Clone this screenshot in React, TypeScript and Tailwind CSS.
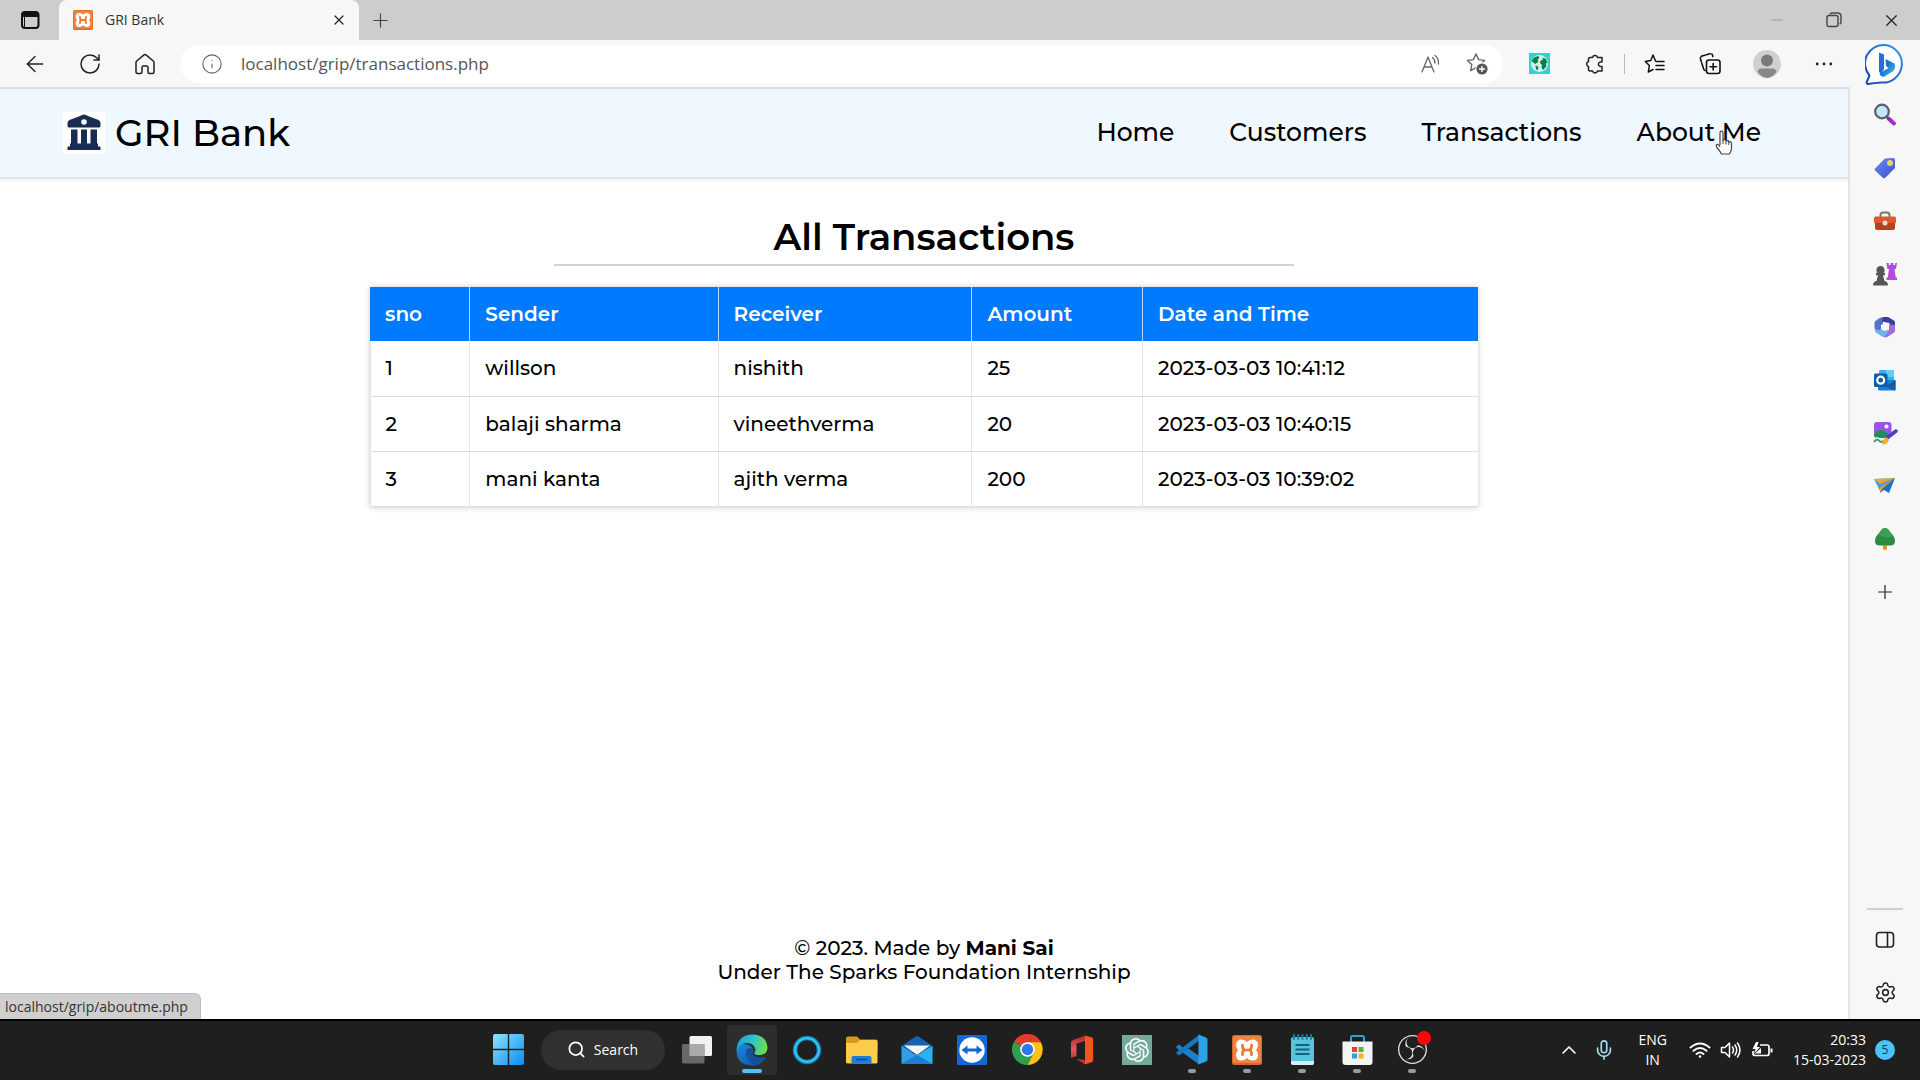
import type { ReactNode } from "react";
import { ArrowLeft, ChevronUp, Info, Mic, Minus, Plus, RotateCw, Search, Settings, X } from "lucide-react";
import { SiObsstudio, SiOpenai } from "react-icons/si";

const transactions = [
  ["1", "willson", "nishith", "25", "2023-03-03 10:41:12"],
  ["2", "balaji sharma", "vineethverma", "20", "2023-03-03 10:40:15"],
  ["3", "mani kanta", "ajith verma", "200", "2023-03-03 10:39:02"],
];

const columns = [
  { label: "sno", width: "w-[9%]" },
  { label: "Sender", width: "w-[22.4%]" },
  { label: "Receiver", width: "w-[22.9%]" },
  { label: "Amount", width: "w-[15.4%]" },
  { label: "Date and Time", width: "w-[30.3%]" },
];

const navLinks = ["Home", "Customers", "Transactions", "About Me"];

function IconButton({ label, className, children }: { label: string; className: string; children: ReactNode }) {
  return (
    <button type="button" aria-label={label} className={`flex shrink-0 items-center justify-center ${className}`}>
      {children}
    </button>
  );
}

/* ---------- browser icons ---------- */

function TabActionsIcon() {
  return (
    <svg width="20" height="20" viewBox="0 0 20 20" fill="none" stroke="#111" strokeWidth="2">
      <rect x="2" y="2" width="16.500" height="16" rx="3" />
      <path d="M2 5h16.500" strokeWidth="4" />
      <path d="M4.500 7v11" strokeWidth="1" />
    </svg>
  );
}

function XamppIcon({ size }: { size: number }) {
  return (
    <svg width={size} height={size} viewBox="0 0 30 30">
      <rect width="30" height="30" rx="2.500" fill="#d9662a" />
      <rect x="1" y="1" width="28" height="27" rx="2" fill="#ee8440" />
      <path
        d="M9.500 4.500Q13 4.500 15 7q2-2.500 5.500-2.500 5.500 0 5.500 5.500 0 3-2 5 2 2 2 5 0 5.500-5.500 5.500Q17 25.500 15 23q-2 2.500-5.500 2.500Q4 25.500 4 20q0-3 2-5-2-2-2-5Q4 4.500 9.500 4.500Z"
        fill="#fff"
      />
      <path d="M10.500 10.200v1.300q0 3.500 3 3.500h3q3 0 3-3.500v-1.300M10.500 19.800v-1.300q0-3.500 3-3.500h3q3 0 3 3.500v1.300" fill="none" stroke="#ea7a35" strokeWidth="2.700" strokeLinecap="round" />
    </svg>
  );
}

function HomeIcon() {
  return (
    <svg width="22" height="22" viewBox="0 0 22 22" fill="none" stroke="#222" strokeWidth="1.500" strokeLinejoin="round">
      <path d="M2 9.500Q2 8.700 2.700 8L10 1.900q1-.8 2 0L19.300 8q.7.700.7 1.500V19q0 1.500-1.500 1.500h-3Q14 20.500 14 19v-4.500q0-1.500-1.500-1.500h-3Q8 13 8 14.500V19q0 1.500-1.500 1.500h-3Q2 20.500 2 19z" />
    </svg>
  );
}

function ReadAloudIcon() {
  return (
    <svg width="22" height="22" viewBox="0 0 22 22" fill="none" stroke="#666" strokeWidth="1.300" strokeLinecap="round" strokeLinejoin="round">
      <path d="M2 19 8 4l6 15M4.200 14h7.600" />
      <path d="M12.500 4.500q2.500 2 2.500 5.500M15 2.500q4 3 3.500 8.500" />
    </svg>
  );
}

const starPath = "M11 2l2.600 5.600 6 .8-4.400 4.200 1.100 6L11 15.700l-5.300 2.900 1.100-6L2.400 8.400l6-.8z";

function StarPlusIcon() {
  return (
    <svg width="24" height="24" viewBox="0 0 24 24" fill="none" stroke="#666" strokeWidth="1.400" strokeLinejoin="round">
      <path d={starPath} />
      <circle cx="17" cy="17" r="6.200" fill="#555" stroke="#fff" strokeWidth="1.200" />
      <path d="M17 14v6M14 17h6" stroke="#fff" />
    </svg>
  );
}

function GlobeExtensionIcon() {
  return (
    <svg width="21" height="21" viewBox="0 0 21 21">
      <rect width="21" height="21" fill="#2fd3cf" />
      <circle cx="10.500" cy="10.500" r="8.500" fill="#c9f7ef" />
      <path d="M2.500 8 5 4.500 9 3l1.500 1.500L8.500 7l1 1.500-3 2.500-1.500-1zM13 5l3.500.5 2 4-1.500 1 .3 3L14 17l-1.500-2.500.5-2.500-2-2 .5-2.500 2.500-.5zM6.500 12.500l3 1.200-.8 3.500-1.700-1z" fill="#157a3d" />
    </svg>
  );
}

function PuzzleIcon() {
  return (
    <svg width="22" height="22" viewBox="0 0 22 22" fill="none" stroke="#222" strokeWidth="1.500" strokeLinejoin="round">
      <path d="M6 4.500h2.500a2.600 2.600 0 0 1 5 0H18V9h-.8a2.300 2.300 0 1 0 0 4.500h.8V18h-4.500a2.600 2.600 0 0 1-5 0H6a1.500 1.500 0 0 1-1.500-1.500v-3a2.600 2.600 0 0 1 0-5V6A1.500 1.500 0 0 1 6 4.500Z" />
    </svg>
  );
}

function FavoritesIcon() {
  return (
    <svg width="22" height="22" viewBox="0 0 22 22" fill="none" stroke="#111" strokeWidth="1.500" strokeLinejoin="round" strokeLinecap="round">
      <path d="M11.500 8 9 2 6.800 7.600l-5.500.8 4 4.200-1 6.400L9 16.500M12 8.500h8M12 12.500h8M12 16.500h8" />
    </svg>
  );
}

function CollectionsIcon() {
  return (
    <svg width="24" height="24" viewBox="0 0 24 24" fill="none" stroke="#111" strokeWidth="1.600" strokeLinejoin="round" strokeLinecap="round">
      <path d="M5 15 2.500 7Q2 5 4 4l8-2.300Q14 1.500 14.500 3l.3 1.500M7 18.500Q5.500 18 5 15" strokeDasharray="4 1.500" />
      <rect x="8.500" y="8" width="13.500" height="13.500" rx="2.500" />
      <path d="M15.200 11.500v6.500M12 14.700h6.500" />
    </svg>
  );
}

function AvatarIcon() {
  return (
    <svg width="28" height="28" viewBox="0 0 28 28">
      <circle cx="14" cy="14" r="14" fill="#d2d0ce" />
      <circle cx="14" cy="10.500" r="6" fill="#7c7a78" />
      <path d="M4.500 21.500q1-3 4-3h11q3 0 4 3Q19.500 28 14 28t-9.500-6.500Z" fill="#8a8886" />
    </svg>
  );
}

function BingIcon() {
  return (
    <svg width="40" height="42" viewBox="0 0 40 42">
      <defs>
        <linearGradient id="bingRing" x1="1" y1="0" x2="0" y2="1">
          <stop offset="0" stopColor="#2f9be8" />
          <stop offset="1" stopColor="#1b3fae" />
        </linearGradient>
        <linearGradient id="bingB" x1="0" y1="0" x2="1" y2="1">
          <stop offset="0" stopColor="#2b6fe0" />
          <stop offset="0.500" stopColor="#1a6fd8" />
          <stop offset="1" stopColor="#3ecfe0" />
        </linearGradient>
      </defs>
      <path d="M20 2a18.500 18.500 0 1 1-4 37.500q-7 .5-13 1.500-2-.5-1-2.500l2.500-6A18.500 18.500 0 0 1 20 2Z" fill="#fff" stroke="url(#bingRing)" strokeWidth="2" />
      <path d="M14 9.500 19 11.500v15l-3.500 4L14 28.500zM20.500 16l9 4.500q2 5-2 8l-8 5q-3.500 1-5-3l9-5.500-2.500-2z" fill="url(#bingB)" />
    </svg>
  );
}

/* ---------- sidebar icons ---------- */

function MagnifierColor() {
  return (
    <svg width="24" height="24" viewBox="0 0 24 24">
      <path d="m15.500 15.500 5.500 5" stroke="#a32bd6" strokeWidth="4" strokeLinecap="round" />
      <path d="m13.500 13.500 3 3" stroke="#555" strokeWidth="2" />
      <circle cx="9" cy="8.500" r="6.800" fill="#c5e6f7" stroke="#5c5f63" strokeWidth="2.200" />
    </svg>
  );
}

function TagColor() {
  return (
    <svg width="24" height="24" viewBox="0 0 24 24">
      <defs>
        <linearGradient id="tag" x1="0" y1="0" x2="1" y2="1">
          <stop offset="0" stopColor="#6b8cf5" />
          <stop offset="1" stopColor="#3b4fce" />
        </linearGradient>
      </defs>
      <path d="M12 2.500 20 2q2 0 2 2v8L12 22q-1 .8-2 0l-8-7.500q-.8-1 0-2z" fill="url(#tag)" />
      <circle cx="17" cy="7" r="3" fill="#e8d36a" />
    </svg>
  );
}

function ToolboxColor() {
  return (
    <svg width="24" height="24" viewBox="0 0 24 24">
      <path d="M7.500 8V6q0-2.500 2.500-2.500h4q2.500 0 2.500 2.500v2" fill="none" stroke="#777" strokeWidth="2" />
      <rect x="1" y="7.500" width="22" height="7" rx="1.500" fill="#dc5a2c" />
      <path d="M2 14h20v5q0 2-2 2H4q-2 0-2-2z" fill="#b8401b" />
      <circle cx="12" cy="14" r="2.500" fill="#ddd" />
    </svg>
  );
}

function ChessColor() {
  return (
    <svg width="26" height="26" viewBox="0 0 26 26">
      <path d="M14.500 2h2.300v2h1.800V2h2.800v2h1.800V2H25l-1 6h-1.500l1.200 8.500H25V19H14.500v-2.500h1.300L17 8h-1.500z" fill="#b44be0" />
      <path d="M8.500 5a4 4 0 0 1 3 6.700h1.500v2.500h-2L12.500 20q3.500.5 3.500 4.500H1Q1 20.500 4.500 20L6 14.200H4v-2.500h1.500A4 4 0 0 1 8.500 5Z" fill="#555" />
    </svg>
  );
}

function Microsoft365Color() {
  return (
    <svg width="24" height="24" viewBox="0 0 24 24">
      <path d="M7.500 2.500 14 2l-4 4.500v5L6 17l-3.500-2q-1-.8-1-2V8q0-1.500 1.200-2.200z" fill="#5a6fc8" />
      <path d="M10 2h5l6 3.500q1 .8 1 2V13l-5.500-3.500V8L9 6.500z" fill="#3a3f9e" />
      <path d="M22 10v5.500q0 1.500-1.200 2.200L14 22q-1.500.8-3 0l-4-2.500 9-5V9.500z" fill="#a06ad8" />
      <path d="M2 14q4 2 8 0l6.500 1.500L11 21.500q-1.500.5-3-.5l-5-3.500Q1.500 16.500 2 14Z" fill="#6cb4ee" />
      <path d="M12 8l4 2v4l-4 2-4-2v-4z" fill="#f7f7f7" />
    </svg>
  );
}

function OutlookColor() {
  return (
    <svg width="24" height="24" viewBox="0 0 24 24">
      <rect x="6" y="2" width="15" height="14" rx="1.500" fill="#36b0e8" />
      <path d="M13 2h8v7h-8z" fill="#65cdf5" />
      <path d="M5 12h17.500v9q0 1.500-1.500 1.500H6.500Q5 22.500 5 21z" fill="#1a7fd0" />
      <path d="m22.500 12-10 6.500 9 4q1 0 1-1.500z" fill="#145da6" />
      <rect x="1" y="5.500" width="13.500" height="13.500" rx="1.500" fill="#0f5ca8" />
      <circle cx="7.700" cy="12.200" r="3.500" fill="none" stroke="#fff" strokeWidth="2.200" />
    </svg>
  );
}

function DesignerColor() {
  return (
    <svg width="26" height="26" viewBox="0 0 26 26">
      <rect x="2" y="2" width="17.500" height="15" rx="3" fill="#9a55e8" />
      <path d="M2 14.500q6-7 11-3l5 4q0 2.500-3 2.500H5q-3 0-3-3.500Z" fill="#218c5c" />
      <circle cx="14.500" cy="6.500" r="2" fill="#fff" />
      <path d="M2 22q3-4 5-1.500t4 .5" fill="none" stroke="#f7f7f7" strokeWidth="4.500" />
      <path d="M2 22q3-4 5-1.500t4 .5" fill="none" stroke="#279b62" strokeWidth="1.800" />
      <path d="m15 18 9-7" stroke="#4b3fc4" strokeWidth="3.500" strokeLinecap="round" />
      <path d="M10 24.500q1-6 4.500-7.500l2.500 3q-2 5-7 4.500Z" fill="#f0ae2c" />
    </svg>
  );
}

function DropColor() {
  return (
    <svg width="24" height="24" viewBox="0 0 24 24">
      <path d="M1 5 22 4 8 13z" fill="#56b4ef" />
      <path d="m1 5 21-1-14 7z" fill="#e9a13b" />
      <path d="m1 5 6 5 15-6-8 11-7 2z" fill="#3f9fe5" />
      <path d="M22 4 7 13v6l4-3 5 3z" fill="#1f6fc4" />
      <path d="M7 13 22 4 10 14l-3 5z" fill="#f0962e" />
    </svg>
  );
}

function TreeColor() {
  return (
    <svg width="24" height="24" viewBox="0 0 24 24">
      <path d="M10 17h4v5q-2 2-4 0z" fill="#e6952f" />
      <path d="M12 1q3 0 5 4 5 4.500 5 9 0 4.500-5 4.500H7q-5 0-5-4.500 0-4.500 5-9 2-4 5-4Z" fill="#2f8a46" />
      <path d="M12 1q3 0 5 4 2 2 3 4-6 3-15-1 1-1.500 2-3 2-4 5-4Z" fill="#3c9f56" />
    </svg>
  );
}

function SidePanelIcon() {
  return (
    <svg width="20" height="18" viewBox="0 0 20 18" fill="none" stroke="#222" strokeWidth="1.600">
      <rect x="1.500" y="1.500" width="17" height="14.500" rx="3" />
      <path d="M12.500 1.500V16" />
    </svg>
  );
}

const sideApps = [
  { label: "Search", icon: <MagnifierColor /> },
  { label: "Shopping", icon: <TagColor /> },
  { label: "Tools", icon: <ToolboxColor /> },
  { label: "Games", icon: <ChessColor /> },
  { label: "Microsoft 365", icon: <Microsoft365Color /> },
  { label: "Outlook", icon: <OutlookColor /> },
  { label: "Image Creator", icon: <DesignerColor /> },
  { label: "Drop", icon: <DropColor /> },
  { label: "Tree", icon: <TreeColor /> },
  { label: "Customize", icon: <Plus size={22} strokeWidth={1.3} color="#222" /> },
];

/* ---------- page ---------- */

function BankLogo() {
  return (
    <svg width="42" height="42" viewBox="0 0 42 42">
      <rect width="42" height="42" fill="#fff" />
      <g fill="#182c54">
        <path d="M21 2.500q2 0 4 1.500l10.500 4q2 1 2 3v3q0 1.500-1.500 1.500H6Q4.500 15.500 4.500 14v-3q0-2 2-3L17 4q2-1.500 4-1.500Z" />
        <path d="M8 17.500h6.500v15H8zM18 17.500h6v15h-6zM27.500 17.500H34v15h-6.500z" />
        <path d="M7 31.500h28v3h2.500v3.500h-33v-3.500H7z" />
      </g>
      <circle cx="21" cy="10" r="2.800" fill="#fff" />
    </svg>
  );
}

function HandCursor() {
  return (
    <svg width="20" height="26" viewBox="0 0 20 26" className="pointer-events-none absolute top-4 right-[27px]">
      <path
        d="M6 15V3q0-1.800 1.500-1.800T9 3v7q2.500-1 3 .8 2.300-.8 2.800 1 2.700-.5 2.700 2V18q0 3-2 6H7.500Q6 21 3 17.500 1.500 15 3 14.500t3 2.500"
        fill="#fff"
        stroke="#444"
        strokeWidth="1.200"
      />
      <path d="M9 10v4M12 11v3.500M14.800 12v3" stroke="#444" />
    </svg>
  );
}

/* ---------- taskbar icons ---------- */

function WindowsIcon() {
  return (
    <svg width="31" height="31" viewBox="0 0 31 31">
      <defs>
        <linearGradient id="win" x1="0" y1="0" x2="1" y2="1">
          <stop offset="0" stopColor="#8fe3ff" />
          <stop offset="1" stopColor="#0a8cf0" />
        </linearGradient>
      </defs>
      <path d="M2 0h12.800v14.800H0V2q0-2 2-2ZM16.200 0H29q2 0 2 2v12.800H16.200zM0 16.200h14.800V31H2q-2 0-2-2zM16.200 16.200H31V29q0 2-2 2H16.200z" fill="url(#win)" />
    </svg>
  );
}

function TaskViewIcon() {
  return (
    <svg width="32" height="30" viewBox="0 0 32 30">
      <rect x="8.500" y="1" width="22.500" height="20" rx="1.500" fill="#f1f1f1" />
      <rect x="1" y="9" width="22.500" height="19.500" rx="1.500" fill="#777" fillOpacity="0.850" />
      <path d="M8.500 9h15v12h-15z" fill="#a9a9a9" />
    </svg>
  );
}

function EdgeIcon() {
  return (
    <svg width="32" height="32" viewBox="0 0 32 32">
      <defs>
        <linearGradient id="edgeTop" x1="0" y1="0.300" x2="1" y2="0.500">
          <stop offset="0" stopColor="#1f9de0" />
          <stop offset="0.500" stopColor="#2fc3c8" />
          <stop offset="1" stopColor="#6be04a" />
        </linearGradient>
        <linearGradient id="edgeBody" x1="0" y1="0" x2="0.800" y2="1">
          <stop offset="0" stopColor="#1b8be0" />
          <stop offset="1" stopColor="#0f56a8" />
        </linearGradient>
      </defs>
      <path d="M.5 16.500Q1 8 8 10q9 1 9.500 7-2 2 0 4.500 4 3.500 10.500 1.500 1.500-.5 1 1Q25 31.500 16.500 31.500.5 31 .5 16.500Z" fill="url(#edgeBody)" />
      <path d="M11 15q-2.500 5 1 10.500 4 5.500 9.500 5.500 5-2 7.500-7 .5-1.500-1-1Q21 25 17.500 21.500 15 18 17.500 16 16 13 11 15Z" fill="#174f9c" />
      <path d="M.5 16.500Q1.500.5 16.500.5 31 1 31.500 14q-.5 7-8.500 7-5.500 0-4.500-2.500 1.500-2 .5-4.500-2-5-8.500-5-6.500 0-10 7.500Z" fill="url(#edgeTop)" />
    </svg>
  );
}

function CortanaIcon() {
  return (
    <svg width="30" height="30" viewBox="0 0 30 30" fill="none">
      <circle cx="15" cy="15" r="12" stroke="#1282b8" strokeWidth="4.500" />
      <circle cx="15" cy="15" r="11.800" stroke="#33c4f2" strokeWidth="2.200" />
    </svg>
  );
}

function ExplorerIcon() {
  return (
    <svg width="32" height="30" viewBox="0 0 32 30">
      <path d="M0 3.500Q0 1.500 2 1.500h9l3 3H30q1.500 0 1.500 1.500v10H0z" fill="#d99a1c" />
      <path d="M0 8h11l3-3h16q1.500 0 1.500 1.500V27q0 1.500-1.500 1.500H2Q0 28.500 0 27z" fill="#fbcd4a" />
      <path d="M5.500 28.500V23q0-2 2-2h16q2 0 2 2v5.500z" fill="#1d7fd6" />
      <path d="M10 24.500h11.500" stroke="#0d4d96" strokeWidth="1.500" />
    </svg>
  );
}

function MailIcon() {
  return (
    <svg width="32" height="30" viewBox="0 0 32 30">
      <path d="M.5 11 14.500 1.500q1.500-1 3 0L31.500 11v6H.5z" fill="#1461ad" />
      <path d="M3 10.500h26L16 20z" fill="#f4f4f6" />
      <path d="M.5 11 16 20.500.5 29z" fill="#2f9fe8" />
      <path d="m31.500 11-31 18h31z" fill="#2bb0f0" />
      <path d="M.5 29 16 20l15.500 9z" fill="#1a7ed4" />
    </svg>
  );
}

function TeamViewerIcon() {
  return (
    <svg width="30" height="30" viewBox="0 0 30 30">
      <rect width="30" height="30" rx="1" fill="#1269d3" />
      <circle cx="15" cy="15" r="12.700" fill="#fff" />
      <path d="m4.500 15 6-4.500V13.500h9v-3l6 4.500-6 4.500v-3h-9v3z" fill="#1269d3" />
    </svg>
  );
}

function ChromeIcon() {
  return (
    <svg width="31" height="31" viewBox="0 0 32 32">
      <path d="M16 16 2.140 8A16 16 0 0 1 29.860 8Z" fill="#e33b2e" />
      <path d="M16 16 2.140 8A16 16 0 0 0 16 32L22.900 20Z" fill="#2f9e4f" />
      <path d="M16 8.500H29.860A16 16 0 0 1 16 32l6.500-12.200Z" fill="#fbc116" />
      <circle cx="16" cy="16" r="7.500" fill="#fff" />
      <circle cx="16" cy="16" r="5.900" fill="#3077ea" />
    </svg>
  );
}

function OfficeIcon() {
  return (
    <svg width="24" height="30" viewBox="0 0 24 30">
      <defs>
        <linearGradient id="office" x1="0" y1="0" x2="0" y2="1">
          <stop offset="0" stopColor="#b3261c" />
          <stop offset="0.600" stopColor="#e05a6a" />
          <stop offset="1" stopColor="#c0392b" />
        </linearGradient>
      </defs>
      <path d="M15 .5 3 5q-2 1-2 3v15l5.500-2V8.500L15 6z" fill="url(#office)" />
      <path d="M15 .5 22 2.500q1.200.5 1.200 2V25q0 1.500-1.200 2l-7 2.500z" fill="#f0561d" />
      <path d="M6.500 24 15 25v4.500z" fill="#c9302c" />
    </svg>
  );
}

function VsCodeIcon() {
  return (
    <svg width="32" height="31" viewBox="0 0 32 31">
      <path d="M23 .5 8 14.500 3 10.500.5 12v2L23 30.500V22L9 12z" fill="#1b80c8" />
      <path d="M.5 19.500 3 21.500 24 6V.500L.5 18z" fill="#1577bd" />
      <path d="m22.500.5 7.500 3q1.500.8 1.500 2v20q0 1.200-1.500 2l-7.500 3z" fill="#2ba3ea" />
    </svg>
  );
}

function NotepadIcon() {
  return (
    <svg width="25" height="32" viewBox="0 0 25 32">
      <rect x="1" y="3" width="23" height="28" rx="2" fill="#57c3df" />
      <path d="M1 27h23v2q0 2-2 2H3q-2 0-2-2z" fill="#d5eef5" />
      <path d="M5.500 11h14M5.500 15.500h14M5.500 20h14" stroke="#17607f" strokeWidth="1.800" />
      <path d="M4 1v4M8.200 1v4M12.500 1v4M16.800 1v4M21 1v4" stroke="#1b7fa5" strokeWidth="2" strokeLinecap="round" />
    </svg>
  );
}

function StoreIcon() {
  return (
    <svg width="31" height="32" viewBox="0 0 31 32">
      <path d="M9 8V3.500Q9 2 10.500 2h10Q22 2 22 3.500V8" fill="none" stroke="#2ca4dd" strokeWidth="2" />
      <path d="M.5 7.500h30V28q0 3-3 3h-24q-3 0-3-3z" fill="#f4f4f4" />
      <path d="M10 13h5v5h-5z" fill="#e8402a" />
      <path d="M16.500 13h5v5h-5z" fill="#6fae2c" />
      <path d="M10 19.500h5v5h-5z" fill="#2ba0e2" />
      <path d="M16.500 19.500h5v5h-5z" fill="#f7b51b" />
    </svg>
  );
}

function ObsIcon() {
  return (
    <span className="relative">
      <SiObsstudio size={29} color="#dcdcdc" />
      <span className="absolute -top-1 -right-1 size-[14px] rounded-full bg-[#f80808]" />
    </span>
  );
}

const taskApps: { label: string; icon: ReactNode; state?: "active" | "open" }[] = [
  { label: "Task view", icon: <TaskViewIcon /> },
  { label: "Microsoft Edge", icon: <EdgeIcon />, state: "active" },
  { label: "Cortana", icon: <CortanaIcon /> },
  { label: "File Explorer", icon: <ExplorerIcon /> },
  { label: "Mail", icon: <MailIcon /> },
  { label: "TeamViewer", icon: <TeamViewerIcon /> },
  { label: "Chrome", icon: <ChromeIcon /> },
  { label: "Office", icon: <OfficeIcon /> },
  {
    label: "ChatGPT",
    icon: (
      <span className="flex size-[30px] items-center justify-center bg-[#74aa9c]">
        <SiOpenai size={24} color="#fff" />
      </span>
    ),
  },
  { label: "Visual Studio Code", icon: <VsCodeIcon />, state: "open" },
  { label: "XAMPP", icon: <XamppIcon size={30} />, state: "open" },
  { label: "Notepad", icon: <NotepadIcon />, state: "open" },
  { label: "Microsoft Store", icon: <StoreIcon />, state: "open" },
  { label: "OBS Studio", icon: <ObsIcon />, state: "open" },
];

function WifiIcon() {
  return (
    <svg width="22" height="18" viewBox="0 0 22 18" fill="none" stroke="#fff" strokeWidth="1.900" strokeLinecap="round">
      <path d="M1.500 6.500q9.500-8 19 0M4.500 9.800q6.500-5.400 13 0M7.500 13q3.500-2.800 7 0" />
      <circle cx="11" cy="15.500" r="1.300" fill="#fff" stroke="none" />
    </svg>
  );
}

function VolumeIcon() {
  return (
    <svg width="22" height="18" viewBox="0 0 22 18" fill="none" stroke="#fff" strokeWidth="1.500" strokeLinecap="round" strokeLinejoin="round">
      <path d="M1.500 6.500h3.500L9.500 2v14L5 11.500H1.500zM12.500 6q2 3 0 6M15 4q3.500 5 0 10M17.500 2q5 7 0 14" />
    </svg>
  );
}

function BatteryIcon() {
  return (
    <svg width="22" height="18" viewBox="0 0 22 18" fill="none" stroke="#fff" strokeWidth="1.700" strokeLinejoin="round">
      <path d="M9 4h7q2 0 2 2v6.500q0 2-2 2H4q-2 0-2-2V10" />
      <path d="M20.500 7.500v4" strokeWidth="2" />
      <path d="M5 1 1.500 8h3L3 13l6-7H6l1.500-5z" fill="#fff" stroke="none" />
      <path d="M4 12.500h6V7z" fill="#fff" stroke="none" />
    </svg>
  );
}

/* ---------- sections ---------- */

function TabBar() {
  return (
    <div className="flex h-10 shrink-0 items-stretch bg-[#cdcdcd]">
      <IconButton label="Tab actions" className="w-[59px]">
        <TabActionsIcon />
      </IconButton>
      <div className="flex w-[300px] items-center rounded-t-lg bg-[#f7f7f7] pr-2 pl-[14px]">
        <XamppIcon size={20} />
        <span className="ml-3 flex-1 text-sm text-[#333]">GRI Bank</span>
        <IconButton label="Close tab" className="size-6">
          <X size={16} strokeWidth={1.8} color="#222" />
        </IconButton>
      </div>
      <IconButton label="New tab" className="w-[42px]">
        <Plus size={23} strokeWidth={1.2} color="#444" />
      </IconButton>
      <div className="ml-auto flex">
        <IconButton label="Minimize" className="w-[57px]">
          <Minus size={18} strokeWidth={1.3} color="#999" />
        </IconButton>
        <IconButton label="Restore" className="w-[57px]">
          <svg width="16" height="16" viewBox="0 0 16 16" fill="none" stroke="#444" strokeWidth="1.400">
            <rect x="1" y="3.500" width="11" height="11" rx="2" />
            <path d="M4 2.200Q4.500 1 6 1h5.500Q15 1 15 4.500V10q0 1.500-1.300 2" />
          </svg>
        </IconButton>
        <IconButton label="Close window" className="w-[58px]">
          <X size={19} strokeWidth={1.5} color="#222" />
        </IconButton>
      </div>
    </div>
  );
}

function Toolbar() {
  return (
    <div className="flex h-[49px] shrink-0 items-center border-b-2 border-[#dfe2e6] bg-[#f7f7f7] pl-[7px]">
      <IconButton label="Back" className="w-[55px]">
        <ArrowLeft size={26} strokeWidth={1.3} color="#222" />
      </IconButton>
      <IconButton label="Refresh" className="w-[55px]">
        <RotateCw size={24} strokeWidth={1.5} color="#222" />
      </IconButton>
      <IconButton label="Home" className="w-[55px]">
        <HomeIcon />
      </IconButton>
      <div className="ml-2 flex h-[38px] flex-1 items-center rounded-full bg-white pr-[14px] pl-[21px]">
        <Info size={22} strokeWidth={1.2} color="#666" />
        <input
          type="text"
          aria-label="Address"
          defaultValue="localhost/grip/transactions.php"
          className="ml-[18px] min-w-0 flex-1 bg-transparent text-[17px] text-[#555] outline-none"
        />
        <IconButton label="Read aloud" className="w-[46px]">
          <ReadAloudIcon />
        </IconButton>
        <IconButton label="Add to favorites" className="ml-[11px] w-6">
          <StarPlusIcon />
        </IconButton>
      </div>
      <IconButton label="Globe extension" className="ml-[9px] w-[55px]">
        <GlobeExtensionIcon />
      </IconButton>
      <IconButton label="Extensions" className="w-[55px]">
        <PuzzleIcon />
      </IconButton>
      <span className="ml-[2px] h-5 w-px bg-[#bbb]" />
      <IconButton label="Favorites" className="ml-[2px] w-[55px]">
        <FavoritesIcon />
      </IconButton>
      <IconButton label="Collections" className="w-[55px]">
        <CollectionsIcon />
      </IconButton>
      <IconButton label="Profile" className="w-[60px]">
        <AvatarIcon />
      </IconButton>
      <IconButton label="Settings and more" className="w-[53px]">
        <svg width="18" height="4" viewBox="0 0 18 4" fill="#222">
          <circle cx="2.200" cy="2" r="1.400" />
          <circle cx="9" cy="2" r="1.400" />
          <circle cx="15.800" cy="2" r="1.400" />
        </svg>
      </IconButton>
    </div>
  );
}

function BankPage() {
  return (
    <div className="relative flex flex-1 flex-col border-r-2 border-[#e6e6e8] bg-white font-[Montserrat,Inter,sans-serif] font-medium text-black">
      <header className="flex h-[90px] items-center justify-between border-b-2 border-[#e0e6ec] bg-[#f0f8ff] pr-[87px] pl-[63px] shadow-[0_1px_4px_rgba(0,0,0,0.08)]">
        <a href="#home" className="flex items-center gap-[10px] text-[37px]">
          <BankLogo />
          GRI Bank
        </a>
        <nav className="flex gap-[55px] text-[25px]">
          {navLinks.map((link) => (
            <a key={link} href={`#${link}`} className="relative">
              {link}
              {link === "About Me" && <HandCursor />}
            </a>
          ))}
        </nav>
      </header>

      <main className="flex flex-1 flex-col items-center">
        <h1 className="mt-[31px] text-[37px] leading-[54px] font-semibold">All Transactions</h1>
        <hr className="w-2/5 border-t-2 border-[#d2d2d2]" />
        <table className="mt-[21px] w-3/5 table-fixed border-collapse text-left text-[20px] shadow-[0_0_6px_rgba(0,0,0,0.22)]">
          <thead>
            <tr className="h-[54px] bg-[#007bff] text-white">
              {columns.map((column) => (
                <th key={column.label} scope="col" className={`border-l border-[#b8d8f8] px-[15px] font-semibold first:border-l-0 ${column.width}`}>
                  {column.label}
                </th>
              ))}
            </tr>
          </thead>
          <tbody>
            {transactions.map((row) => (
              <tr key={row[0]} className="h-[55px] border-b border-[#dddddd]">
                {row.map((cell, i) => (
                  <td key={i} className="border-l border-[#e4e4e4] px-[15px]">
                    {cell}
                  </td>
                ))}
              </tr>
            ))}
          </tbody>
        </table>
      </main>

      <footer className="pb-[35px] text-center text-[20px] leading-6">
        <p>
          © 2023. Made by <b className="font-bold">Mani Sai</b>
        </p>
        <p>Under The Sparks Foundation Internship</p>
      </footer>

      <div className="absolute bottom-0 left-0 rounded-tr-md border-t border-r border-[#bdbdbd] bg-[#cfcfcf] pr-3 pl-[5px] font-['Open_Sans',sans-serif] text-sm leading-[25px] font-normal text-[#333]">
        localhost/grip/aboutme.php
      </div>
    </div>
  );
}

function Sidebar() {
  return (
    <aside className="flex w-[70px] shrink-0 flex-col items-center bg-[#f7f7f7]">
      <IconButton label="Bing" className="h-12 w-full">
        <BingIcon />
      </IconButton>
      {sideApps.map((app) => (
        <IconButton key={app.label} label={app.label} className="h-[53px] w-full">
          {app.icon}
        </IconButton>
      ))}
      <hr className="mt-auto w-9 border-t-2 border-[#cfcfcf]" />
      <IconButton label="Toggle sidebar" className="mt-1 h-[52px] w-full">
        <SidePanelIcon />
      </IconButton>
      <IconButton label="Settings" className="h-[53px] w-full">
        <Settings size={23} strokeWidth={1.6} color="#222" />
      </IconButton>
    </aside>
  );
}

function Taskbar() {
  return (
    <footer className="grid h-[61px] shrink-0 grid-cols-[1fr_auto_1fr] items-center border-t-2 border-black bg-[#1f1f1f] pb-[2px] text-white">
      <div />
      <div className="flex items-center">
        <IconButton label="Start" className="w-[55px]">
          <WindowsIcon />
        </IconButton>
        <button type="button" className="mx-[5px] flex h-10 w-[124px] items-center justify-center gap-2 rounded-full bg-[#303030] text-sm">
          <Search size={19} strokeWidth={2.2} />
          Search
        </button>
        {taskApps.map((app) => (
          <div key={app.label} className="flex w-[55px] justify-center">
            <button
              type="button"
              aria-label={app.label}
              className={`relative flex h-[50px] w-[50px] items-center justify-center rounded ${app.state === "active" ? "bg-[#2d2d2d]" : ""}`}
            >
              {app.icon}
              {app.state === "active" && <span className="absolute bottom-[2px] h-1 w-5 rounded-full bg-[#4cc2ff]" />}
              {app.state === "open" && <span className="absolute bottom-[2px] h-1 w-2 rounded-full bg-[#9a9a9a]" />}
            </button>
          </div>
        ))}
      </div>
      <div className="flex items-center justify-end pr-[25px] text-sm">
        <ChevronUp size={24} strokeWidth={1.6} />
        <Mic size={22} strokeWidth={1.8} color="#a5dcf0" className="ml-3" />
        <span className="ml-[23px] text-center leading-5">
          ENG
          <br />
          IN
        </span>
        <span className="ml-[22px] flex gap-[9px]">
          <WifiIcon />
          <VolumeIcon />
          <BatteryIcon />
        </span>
        <span className="ml-5 text-right leading-5">
          20:33
          <br />
          15-03-2023
        </span>
        <span className="ml-[9px] flex size-5 items-center justify-center rounded-full bg-[#4cc2ff] text-xs text-[#15384c]">5</span>
      </div>
    </footer>
  );
}

export default function App() {
  return (
    <div className="flex min-h-screen flex-col bg-[#f7f7f7] font-['Open_Sans',sans-serif]">
      <TabBar />
      <div className="flex flex-1">
        <div className="flex min-w-0 flex-1 flex-col">
          <Toolbar />
          <BankPage />
        </div>
        <Sidebar />
      </div>
      <Taskbar />
    </div>
  );
}
